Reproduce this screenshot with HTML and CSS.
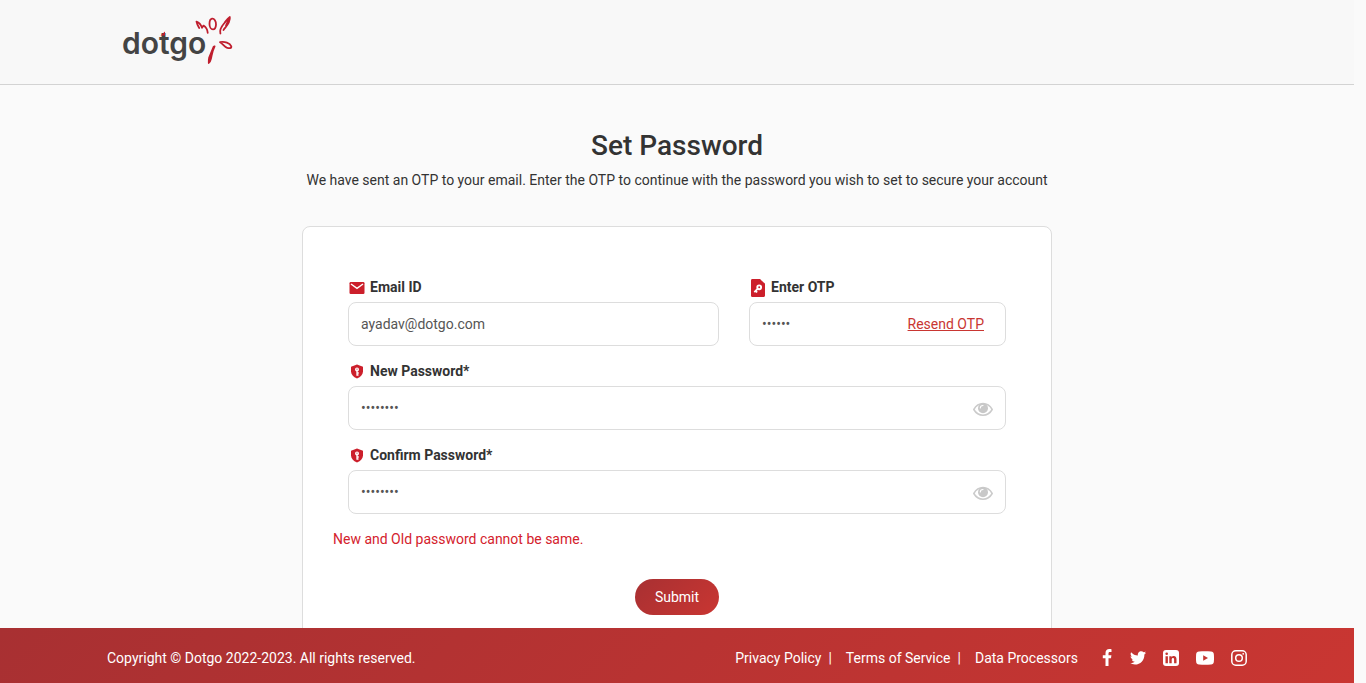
FILE: index.html
```
<!DOCTYPE html>
<html lang="en">
<head>
<meta charset="utf-8">
<meta name="viewport" content="width=device-width, initial-scale=1">
<title>Dotgo - Set Password</title>
<link rel="stylesheet" href="styles.css">
</head>
<body>
<svg class="defs" width="0" height="0" aria-hidden="true">
  <symbol id="shield" viewBox="0 0 14 16">
    <path fill="#cc1f2b" d="M7 1.500 13 3.800v4.500c0 3.300-2.300 5.700-6 7.300-3.700-1.600-6-4-6-7.300V3.800z"/>
    <path fill="none" stroke="#fff" stroke-width="1.300" d="M7 8V12.800M7 10h1.800M7 12h1.500"/>
    <circle cx="7" cy="6.500" r="2" fill="#fff"/><circle cx="7" cy="6.100" r=".6" fill="#cc1f2b"/>
  </symbol>
  <symbol id="eye" viewBox="0 0 20 14">
    <path fill="none" stroke="#cbcbcb" stroke-width="1.500" d="M.8 7.500C3 3.700 6.200 1.600 10 1.600s7 2.100 9.200 5.900C17 11.300 13.800 13.200 10 13.200S3 11.300.8 7.500z"/>
    <circle cx="10" cy="6.300" r="5" fill="#c8c8c8"/>
    <path fill="none" stroke="#fff" stroke-width="1.100" stroke-linecap="round" d="M7.300 6C7.300 4.400 8.400 3.500 10 3.500"/>
  </symbol>
</svg>

<header class="header">
  <div class="container header-inner">
    <a class="logo" href="#" aria-label="dotgo home">
      <span class="logo-word">dotgo</span>
      <svg class="logo-mark" viewBox="0 0 112 52" width="112" height="52" fill="none" stroke="#bf1e2e" stroke-width="1.800" stroke-linecap="round" stroke-linejoin="round" aria-hidden="true">
        <path fill="#bf1e2e" stroke="none" d="M38.500 19.500 43 15.500v4z"/>
        <path d="M77.200 12C76 10 74.800 7.500 74.500 5.700c2.500.8 4.500 3.300 5.500 6.100l1.500-2.200c2.500 1.700 4 4.200 4.200 7.200"/>
        <path d="M90 2.600c2.200-.4 4.200 2.500 4 6-.2 3-1.400 4.800-3 4.800-2 0-3.500-2.500-3.500-5.500 0-2.800 1-5 2.500-5.300z"/>
        <path d="M98.400 17.500c-1-3 .6-6.500 4-10.500 1.500-2 3-4.500 5.400-6 .5 2-.5 4-1.300 6-1.200 2.800-3.500 4.800-5 7M107.500 1.500l-3.500 8"/>
        <path d="M98 26.200c4.500-1 10 .8 11.300 4.200.3 2.200-2.300 2-4.600 1.200-2.400-1-3.900-4-6.700-5.400z"/>
        <path fill="#bf1e2e" d="M91.600 30.800 87.200 41.500c-.4 2-.5 3.800-.4 5.500 1.500-.5 1.700-3 2.300-5 .8-3.500 1.300-7.500 3.500-11.700z"/>
      </svg>
    </a>
  </div>
</header>

<main class="main">
  <h1 class="title">Set Password</h1>
  <p class="lead">We have sent an OTP to your email. Enter the OTP to continue with the password you wish to set to secure your account</p>

  <form class="card">
    <div class="row">
      <div class="field">
        <label class="label" for="email">
          <svg class="icon" width="16" height="18" viewBox="0 0 16 18" aria-hidden="true"><rect x=".5" y="4" width="15" height="12" rx="1.200" fill="#cc1f2b"/><path fill="none" stroke="#fff" stroke-width="1.500" d="M2 6 8 10.300l6-4.300"/></svg>
          Email ID
        </label>
        <input class="input" id="email" type="email" value="ayadav@dotgo.com">
      </div>
      <div class="field">
        <label class="label" for="otp">
          <svg class="icon" width="16" height="20" viewBox="0 0 16 20" aria-hidden="true"><path fill="#cc1f2b" d="M2.300 2H10l5 4.500v12c0 .9-.6 1.500-1.500 1.500H2.300C1.500 20 1 19.400 1 18.500v-15C1 2.600 1.500 2 2.300 2z"/><path fill="none" stroke="#fff" d="M11 2.300 14.500 5.700"/><circle cx="9.200" cy="10.300" r="1.900" fill="none" stroke="#fff" stroke-width="1.900"/><path fill="none" stroke="#fff" stroke-width="1.800" d="M7.800 11.700 4.300 15.200M5.500 13.800l1.700 1.500"/></svg>
          Enter OTP
        </label>
        <div class="control">
          <input class="input input-otp" id="otp" type="password" value="482913">
          <a class="resend" href="#">Resend OTP</a>
        </div>
      </div>
    </div>
    <div class="field">
      <label class="label" for="new-password"><svg class="icon" width="16" height="16" aria-hidden="true"><use href="#shield"/></svg>New Password*</label>
      <div class="control">
        <input class="input input-password" id="new-password" type="password" value="dotgo123">
        <button class="reveal" type="button" aria-label="Show new password"><svg width="20" height="14"><use href="#eye"/></svg></button>
      </div>
    </div>
    <div class="field">
      <label class="label" for="confirm-password"><svg class="icon" width="16" height="16" aria-hidden="true"><use href="#shield"/></svg>Confirm Password*</label>
      <div class="control">
        <input class="input input-password" id="confirm-password" type="password" value="dotgo123">
        <button class="reveal" type="button" aria-label="Show confirmed password"><svg width="20" height="14"><use href="#eye"/></svg></button>
      </div>
    </div>
    <p class="error" role="alert">New and Old password cannot be same.</p>
    <button class="submit" type="submit">Submit</button>
  </form>
</main>

<footer class="footer">
  <div class="container footer-inner">
    <p class="copyright">Copyright © Dotgo 2022-2023. All rights reserved.</p>
    <nav class="links">
      <span class="link-item"><a href="#">Privacy Policy</a><span>|</span></span>
      <span class="link-item"><a href="#">Terms of Service</a><span>|</span></span>
      <span class="link-item"><a href="#">Data Processors</a></span>
    </nav>
    <div class="social">
      <a href="#" aria-label="Facebook"><svg width="11" height="18" viewBox="0 0 11 18"><path fill="#fff" d="M9.500.2v2.700H8c-1.200 0-1.500.6-1.500 1.400v2h2.900L9 9.200H6.500V17h-3V9.200H.8V6.300h2.700V3.900C3.500 1.400 5 0 7.300 0c1 0 1.900.1 2.200.2z"/></svg></a>
      <a href="#" aria-label="Twitter"><svg width="16" height="14" viewBox="0 0 16 14"><path fill="#fff" d="M16 1.800c-.5.700-1 1.200-1.600 1.600C14.600 9 10.400 13.500 5 13.500c-1.800 0-3.500-.5-5-1.400 1.700.2 3.400-.3 4.800-1.300-1.400 0-2.600-1-3-2.300h1.400C1.700 8.200.6 6.900.6 5.300c.5.200 1 .4 1.500.4C.6 4.700.2 2.700 1.100 1.200c1.700 2 4.100 3.300 6.800 3.400C7.400 2.300 9.100.3 11.200.3c1 0 1.800.4 2.400 1 .8-.1 1.500-.4 2.100-.8-.2.800-.7 1.400-1.400 1.800.6 0 1.200-.2 1.700-.5z"/></svg></a>
      <a href="#" aria-label="LinkedIn"><svg width="16" height="16" viewBox="0 0 16 16"><rect width="16" height="16" rx="3" fill="#fff"/><path fill="#c4342f" d="M2.500 6.200h2.400v7.100H2.500zM6.300 6.200h2.300v1c.4-.7 1.200-1.200 2.200-1.200 1.900 0 2.700 1.300 2.700 3.200v4.100h-2.400V9.500c0-.9-.3-1.600-1.100-1.600-.9 0-1.300.7-1.300 1.600v3.800H6.300z"/><circle cx="3.700" cy="3.800" r="1.300" fill="#c4342f"/></svg></a>
      <a href="#" aria-label="YouTube"><svg width="18" height="14" viewBox="0 0 18 14"><path fill="#fff" d="M3 .6c4-.4 8-.4 12 0 1.800.2 2.600 1 2.800 2.400.3 2.700.3 5.300 0 8-.2 1.400-1 2.200-2.800 2.400-4 .4-8 .4-12 0C1.200 13.200.4 12.400.2 11c-.3-2.700-.3-5.300 0-8C.4 1.600 1.200.8 3 .6z"/><path fill="#c4342f" d="M7.200 4.300 12 7 7.200 9.700z"/></svg></a>
      <a href="#" aria-label="Instagram"><svg width="16" height="16" viewBox="0 0 16 16" fill="none" stroke="#fff" stroke-width="1.500"><rect x=".8" y=".8" width="14.400" height="14.400" rx="4"/><circle cx="8" cy="8" r="3.300"/><circle cx="12.200" cy="3.800" r=".9" fill="#fff" stroke="none"/></svg></a>
    </div>
  </div>
</footer>
</body>
</html>
```
FILE: styles.css
```
* {
  box-sizing: border-box;
}

html {
  background: #fafafa;
  scrollbar-width: none;
}

body {
  margin: 0;
  padding: 0 12px 56px 0;
  font: 14px/22px Roboto, "Liberation Sans", sans-serif;
  color: #333;
}

h1,
p {
  margin: 0;
}

svg {
  display: block;
}

.defs {
  position: absolute;
}

button,
input {
  font: inherit;
}

.container {
  width: 100%;
  max-width: 1140px;
  margin: 0 auto;
}

.header {
  background: #f8f8f8;
  border-bottom: 1px solid #d3d3d3;
}

.header-inner {
  display: flex;
  padding: 16px 15px;
}

.logo {
  position: relative;
  display: block;
  height: 52px;
  color: #444;
  text-decoration: none;
}

.logo-word {
  display: block;
  font: 600 30px/54px Inter, sans-serif;
}

.logo-mark {
  position: absolute;
  top: 0;
  left: 0;
  overflow: visible;
}

.main {
  max-width: 750px;
  margin: 0 auto;
  padding: 44px 0 24px;
}

.title {
  font-size: 28px;
  font-weight: 500;
  line-height: 34px;
  text-align: center;
}

.lead {
  margin-top: 6px;
  text-align: center;
}

.card {
  display: flex;
  flex-direction: column;
  gap: 14px;
  margin-top: 35px;
  padding: 49px 45px;
  background: #fff;
  border: 1px solid #ddd;
  border-radius: 8px;
}

.row {
  display: grid;
  grid-template-columns: 371fr 257fr;
  gap: 30px;
}

.label {
  display: flex;
  align-items: center;
  gap: 5px;
  height: 22px;
  margin-bottom: 4px;
  font-weight: 700;
}

.icon {
  flex: none;
  margin-left: 1px;
}

.control {
  position: relative;
}

.input {
  display: block;
  width: 100%;
  height: 44px;
  padding: 0 12px;
  border: 1px solid #ddd;
  border-radius: 8px;
  background: #fff;
  color: #555;
}

.input-otp {
  padding-right: 110px;
}

.input-password {
  padding-right: 44px;
}

.resend {
  position: absolute;
  top: 11px;
  right: 22px;
  color: #c93632;
}

.reveal {
  position: absolute;
  top: 16px;
  right: 13px;
  padding: 0;
  border: 0;
  background: none;
}

.error {
  margin-left: -15px;
  color: #d4212c;
}

.submit {
  align-self: center;
  height: 36px;
  margin-top: 15px;
  padding: 0 20px;
  border: 0;
  border-radius: 18px;
  background: linear-gradient(135deg, #a83032, #c93632);
  color: #fff;
}

.footer {
  position: fixed;
  right: 12px;
  bottom: 0;
  left: 0;
  background: linear-gradient(135deg, #a83032, #c93632);
  color: #fff;
}

.footer a {
  color: inherit;
  text-decoration: none;
}

.footer-inner {
  display: flex;
  align-items: center;
  min-height: 55px;
  padding-bottom: 4px;
  padding-top: 8px;
}

.copyright {
  margin-right: auto;
}

.links {
  display: flex;
  gap: 14px;
}

.link-item {
  display: flex;
  gap: 7px;
}

.social {
  display: flex;
  align-items: center;
  gap: 17px;
  margin-left: 24px;
}
```
